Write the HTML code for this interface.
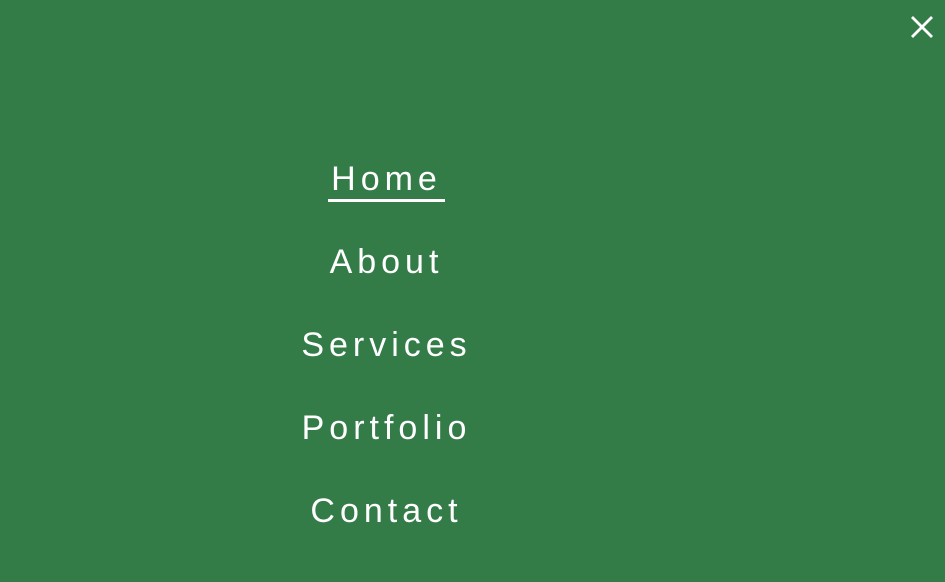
<!DOCTYPE html>
<html><head><style>
html,body{margin:0;padding:0;}
body{width:945px;height:582px;background:#337c48;position:relative;overflow:hidden;font-family:"Liberation Sans",sans-serif;color:#fff;}
.i{position:absolute;left:184px;width:400px;text-align:center;font-size:34px;letter-spacing:5px;line-height:1;}
.i span{margin-right:-5px;}
.u{position:absolute;left:328px;top:199px;width:117px;height:3px;background:#fff;}
</style></head><body>
<svg style="position:absolute;left:905px;top:10px" width="34" height="34" viewBox="0 0 34 34"><path d="M7 7 L27 27 M27 7 L7 27" stroke="#fff" stroke-width="2.8" fill="none"/></svg>
<div class="i" style="top:162px"><span>Home</span></div>
<div class="u"></div>
<div class="i" style="top:245px"><span>About</span></div>
<div class="i" style="top:328px"><span>Services</span></div>
<div class="i" style="top:411px"><span>Portfolio</span></div>
<div class="i" style="top:494px"><span>Contact</span></div>
</body></html>
